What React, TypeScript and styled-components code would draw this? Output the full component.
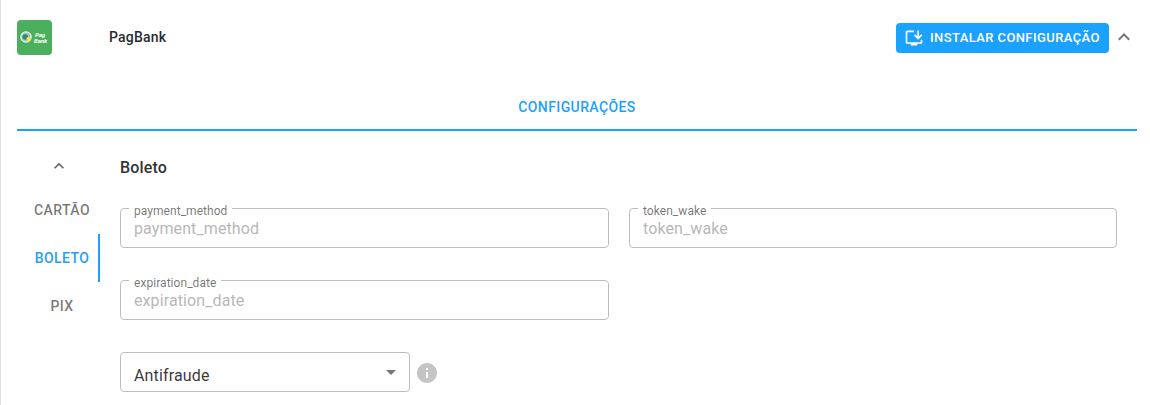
import React from "react";
import styled, { createGlobalStyle } from "styled-components";

const Global = createGlobalStyle`
  html, body { margin: 0; padding: 0; background: #fff; }
  body { font-family: Roboto, "Liberation Sans", sans-serif; color: rgba(0,0,0,.87); }
  * { box-sizing: border-box; }
`;

const Page = styled.div`
  width: 1150px;
  height: 405px;
  overflow: hidden;
  border-left: 1px solid #e0e0e0;
  padding: 0 13px 0 16px;
`;

const Header = styled.header`
  display: flex;
  align-items: center;
  height: 74px;
`;

const Logo = styled.svg`
  width: 35px;
  height: 35px;
  flex: none;
  margin-right: 57px;
`;

const Name = styled.div`
  font-size: 14px;
  font-weight: 500;
  letter-spacing: 0.2px;
  color: #2b2b2b;
  flex: 1;
`;

const InstallButton = styled.button`
  display: flex;
  align-items: center;
  gap: 6px;
  height: 30px;
  width: 213px;
  margin-top: 1px;
  padding: 0 0 0 8px;
  border: 0;
  border-radius: 4px;
  background: #1ba1ff;
  color: #fff;
  font: 500 13px/1 Roboto, sans-serif;
  letter-spacing: 0.4px;
  white-space: nowrap;
`;

const Chevron = styled.svg<{ $size: number; $color: string }>`
  width: ${(p) => p.$size}px;
  height: ${(p) => p.$size}px;
  fill: ${(p) => p.$color};
  flex: none;
  display: block;
`;

const HeaderChevron = styled.div`
  margin-left: 3px;
  margin-right: 1px;
  display: flex;
`;

const TabBar = styled.div`
  height: 57px;
  border-bottom: 2px solid #1ba1ff;
  display: flex;
  align-items: center;
  justify-content: center;
  padding-top: 10px;
  color: #1ba1ff;
  font-size: 14px;
  font-weight: 500;
  letter-spacing: 0.4px;
`;

const Body = styled.div`
  display: flex;
  padding-top: 24px;
`;

const Side = styled.nav`
  width: 83px;
  flex: none;
  display: flex;
  flex-direction: column;
  margin-right: 20px;
`;

const SideUp = styled.div`
  height: 31px;
  padding: 1px 0 0 32px;
`;

const SideTab = styled.div<{ $active?: boolean }>`
  height: 48px;
  display: flex;
  align-items: center;
  justify-content: center;
  padding-left: 9px;
  font-size: 14px;
  font-weight: 500;
  letter-spacing: 0.4px;
  color: ${(p) => (p.$active ? "#2a9df4" : "rgba(0,0,0,.54)")};
  border-right: 2px solid ${(p) => (p.$active ? "#1ba1ff" : "transparent")};
`;

const Content = styled.div`
  width: 997px;
  flex: none;
`;

const Title = styled.h2`
  margin: 0;
  font-size: 16px;
  line-height: 24px;
  font-weight: 500;
  letter-spacing: 0.15px;
  color: #333;
  height: 53px;
  padding-top: 1px;
`;

const FieldGrid = styled.div`
  display: grid;
  grid-template-columns: 489px 488px;
  column-gap: 20px;
  row-gap: 32px;
`;

const Field = styled.div`
  position: relative;
  height: 40px;
  border: 1px solid #bdbdbd;
  border-radius: 4px;
  padding: 10px 13px 0;
  font-size: 16px;
  line-height: 20px;
  letter-spacing: 0.1px;
  color: #b8b8b8;
`;

const FloatLabel = styled.span`
  position: absolute;
  top: -3px;
  left: 8px;
  padding: 0 5px;
  background: #fff;
  font-size: 12px;
  line-height: 10px;
  letter-spacing: 0.05px;
  color: rgba(0,0,0,.55);
`;

const SelectRow = styled.div`
  display: flex;
  align-items: center;
  margin-top: 32px;
  gap: 5px;
`;

const Select = styled.div`
  width: 290px;
  height: 40px;
  border: 1px solid #bdbdbd;
  border-radius: 4px;
  display: flex;
  align-items: center;
  justify-content: space-between;
  padding: 6px 6px 0 13px;
  font-size: 16px;
  letter-spacing: 0.15px;
  color: rgba(0,0,0,.8);
`;

const SelectArrow = styled.svg`
  width: 24px;
  height: 24px;
  fill: #757575;
  margin-top: -7px;
`;

const InfoIcon = styled.svg`
  width: 24px;
  height: 24px;
  fill: #c4c4c4;
  display: block;
  margin-top: 2px;
`;

const LogoMark = () => (
  <Logo viewBox="0 0 35 35" role="img" aria-label="PagBank">
    <rect width="35" height="35" rx="4" fill="#4caf5d" />
    <circle cx="9" cy="17" r="5.2" fill="#86c9c2" stroke="#eef5ea" strokeWidth="1.2" />
    <circle cx="8.3" cy="17" r="2.8" fill="#3d8279" />
    <circle cx="11.7" cy="19" r="2.3" fill="#f7e23a" />
    <text x="18" y="16.5" fontSize="6" fontStyle="italic" fontWeight="700" fill="#fff" fontFamily="Roboto, sans-serif">Pag</text>
    <text x="17" y="22.5" fontSize="6" fontStyle="italic" fontWeight="700" fill="#fff" fontFamily="Roboto, sans-serif">Bank</text>
  </Logo>
);

const InstallIcon = () => (
  <svg width="20" height="20" viewBox="0 0 24 24" fill="#fff">
    <path d="M20 17H4V5h8V3H4c-1.11 0-2 .89-2 2v12c0 1.1.89 2 2 2h4v2h8v-2h4c1.1 0 2-.9 2-2v-3h-2v3z" />
    <path d="M17 14l5-5-1.41-1.41L18 10.17V3h-2v7.17l-2.59-2.58L12 9z" />
  </svg>
);

const UP = "M12 8l-6 6 1.41 1.41L12 10.83l4.59 4.58L18 14z";

export default function App() {
  return (
    <Page>
      <Global />
      <Header>
        <LogoMark />
        <Name>PagBank</Name>
        <InstallButton>
          <InstallIcon />
          INSTALAR CONFIGURAÇÃO
        </InstallButton>
        <HeaderChevron>
          <Chevron $size={24} $color="#757575" viewBox="0 0 24 24">
            <path d={UP} />
          </Chevron>
        </HeaderChevron>
      </Header>
      <TabBar>CONFIGURAÇÕES</TabBar>
      <Body>
        <Side>
          <SideUp>
            <Chevron $size={20} $color="#616161" viewBox="0 0 24 24">
              <path d={UP} />
            </Chevron>
          </SideUp>
          <SideTab>CARTÃO</SideTab>
          <SideTab $active>BOLETO</SideTab>
          <SideTab>PIX</SideTab>
        </Side>
        <Content>
          <Title>Boleto</Title>
          <FieldGrid>
            <Field>
              <FloatLabel>payment_method</FloatLabel>
              payment_method
            </Field>
            <Field>
              <FloatLabel>token_wake</FloatLabel>
              token_wake
            </Field>
            <Field>
              <FloatLabel>expiration_date</FloatLabel>
              expiration_date
            </Field>
          </FieldGrid>
          <SelectRow>
            <Select>
              Antifraude
              <SelectArrow viewBox="0 0 24 24">
                <path d="M7 10l5 5 5-5z" />
              </SelectArrow>
            </Select>
            <InfoIcon viewBox="0 0 24 24">
              <path d="M12 2C6.48 2 2 6.48 2 12s4.48 10 10 10 10-4.48 10-10S17.52 2 12 2zm1 15h-2v-6h2v6zm0-8h-2V7h2v2z" />
            </InfoIcon>
          </SelectRow>
        </Content>
      </Body>
    </Page>
  );
}
